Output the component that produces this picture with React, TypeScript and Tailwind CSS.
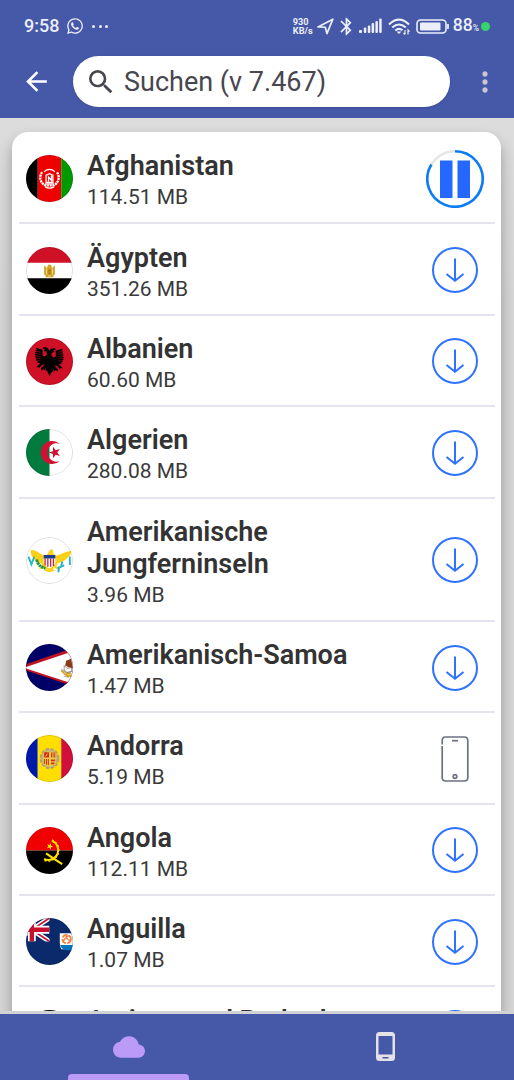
import type { ReactNode } from "react";
import { MdArrowBack, MdBluetooth, MdCloud, MdMoreVert, MdSearch } from "react-icons/md";
import { FaWhatsapp } from "react-icons/fa";

type Status = "paused" | "available" | "installed";

interface Region {
  name: string;
  size: string;
  flag: ReactNode;
  status: Status;
}

const star = "M0-10 2.4-3.1 9.5-3.1 3.8 1.2 5.9 8.1 0 4 -5.9 8.1 -3.8 1.2 -9.5-3.1 -2.4-3.1Z";

const Afghanistan = (
  <>
    <path fill="#000" d="M0 0h12v48H0z" />
    <path fill="#ee0000" d="M12 0h24v48H12z" />
    <path fill="#009900" d="M36 0h12v48H36z" />
    <g fill="none" stroke="#fff">
      <path d="M16.500 17.500a9 9 0 0 0 3 13.500h9a9 9 0 0 0 3-13.500" strokeWidth="2.400" strokeDasharray="2.2 .7" />
      <path d="M18.500 17q5.500-4.500 11 0M19.500 32.500q4.500 2.500 9 0" strokeWidth="1.3" />
      <path d="M20.500 28v-7.500l3.500-1.500 3.500 1.500v7.500zM23 27v-4.500l3 3.500v-5M19.500 29.500h9" strokeWidth="1.3" />
    </g>
  </>
);

const Egypt = (
  <>
    <path fill="#fff" d="M0 0h48v48H0z" />
    <path fill="#ce1126" d="M0 0h48v16H0z" />
    <path fill="#000" d="M0 32h48v16H0z" />
    <path fill="#d3a327" d="M18.500 19l3 2.500 1-3.500h3l1 3.500 3-2.500v9l-1.500 1v2h-8v-2l-1.500-1z" />
    <path stroke="#fbf3dc" strokeWidth=".7" fill="none" d="M21 22v6M27 22v6M22.500 29.500h3" />
    <path fill="#b98a12" d="M22.500 22.500h3v5l-1.500 1-1.500-1z" />
  </>
);

const Albania = (
  <>
    <path fill="#ce1126" d="M0 0h48v48H0z" />
    <path
      fill="#000"
      d="M24 13l-2-3-4-.8-1 1.500 2.500.8-1.500 1.500 3 1 .5 3-2.500 2-2-1V12l-7-2 1 2.300h-1.500l1 2h-1.500l1 2h-1.200l1 2H9l1.500 2H9.200l1.700 2-1 .3 2.300 1.700-.8.8 3 .7-3.900 4 2.300-.2.200 1.600 3.500-3.800 2.500-.4-3.800 4.200.7 2 1.900-1.500.8 1.300 1.800-2.300-.5 3 1.500-.4L24 39l2.600-4.700 1.500.4-.5-3 1.800 2.300.8-1.300 1.900 1.500.7-2-3.800-4.200 2.500.4 3.500 3.800.2-1.600 2.300.2-3.900-4 3-.7-.8-.8 2.300-1.700-1-.3 1.700-2h-1.300l1.500-2h-1.400l1-2H37.400l1-2h-1.500l1-2h-1.500l1-2.300-7 2v6l-2 1-2.500-2 .5-3 3-1-1.500-1.500 2.500-.8-1-1.500-4 .8z"
    />
    <path stroke="#ce1126" strokeWidth=".5" d="M9 13l6 1.500M9 15.500l6 1.300M9 18l6 1M9 20.500l6 .8M10 23l5 .3M39 13l-6 1.500M39 15.500l-6 1.300M39 18l-6 1M39 20.500l-6 .8M38 23l-5 .3" />
  </>
);

const Algeria = (
  <>
    <path fill="#fff" d="M24 0h24v48H24z" />
    <path fill="#007a3d" d="M0 0h24v48H0z" />
    <path fill="#d21034" d="M34.500 15A11.800 11.800 0 1 0 34.500 33 9.500 9.500 0 1 1 34.500 15z" />
    <path fill="#d21034" transform="translate(29.500 24) rotate(-18) scale(.62)" d={star} />
  </>
);

const VirginIslands = (
  <>
    <path fill="#fff" d="M0 0h48v48H0z" />
    <path
      fill="#fcd116"
      d="M24 14c2-3 4-1 4 2l1 3c7 0 8-4 18-5-1 5-7 11-15 13l-1 3 4 2-3 1-4-2v3h3l-7 2-7-2h3v-3l-4 2-3-1 4-2-1-3C8 25 4 19 5 13c8 1 10 6 16 6z"
    />
    <path fill="#fff" d="M18 19h12v7q-1 4-6 6-5-2-6-6z" />
    <path d="M19.500 22v7M22.300 22v8.500M25.200 22v8.500M28 22v7.500" stroke="#c4203b" strokeWidth="1.300" />
    <path fill="#1b3c8f" d="M18 18.500h12V22H18z" />
    <path d="M11 23q1 7 9 9" stroke="#1f9438" strokeWidth="3" strokeDasharray="2.500 .5" fill="none" />
    <path d="M2.500 20 5.500 28 8.500 20M44.800 20v8.500" stroke="#27b6c4" strokeWidth="1.900" fill="none" />
    <path d="M33 36l1-6M36 30l1-5M32 32l7-3" stroke="#27b6c4" strokeWidth="2" />
  </>
);

const AmericanSamoa = (
  <>
    <path fill="#000066" d="M0 0h48v48H0z" />
    <path fill="#c1121f" d="M-2 21.500 48 4v39L-2 26.500z" />
    <path fill="#fff" d="M0 23.500 48 7.500v33L0 25z" />
    <path fill="#8b3a18" d="M41 17l5-2 2 10-4-1-4-2z" />
    <path fill="#fff" stroke="#8a7770" strokeWidth=".8" d="M39 22l3 3 4-1 1 4-5 1-3-2z" />
    <path stroke="#dba21c" strokeWidth="1.800" fill="none" d="M36 27l4 4 6-1M40 31l3 2 4-1" />
    <path stroke="#80614a" strokeWidth=".6" fill="none" d="M36 25.500l5 4 5-1M39 33l5 1" />
  </>
);

const Andorra = (
  <>
    <path fill="#0018a8" d="M0 0h12v48H0z" />
    <path fill="#fedf00" d="M12 0h24v48H12z" />
    <path fill="#d0103a" d="M36 0h12v48H36z" />
    <ellipse cx="24" cy="24" rx="9" ry="9.800" fill="#c7b37f" stroke="#b7a268" strokeWidth="2.200" strokeDasharray="3.500 1.500" />
    <path fill="#f0cf3c" d="M18 17h12v13l-6 2.500-6-2.500z" />
    <path fill="#d5281f" d="M18.500 17.500h5v5.500h-5zM25.500 17.500h.9v5.500h-.9zM27.200 17.500h.9v5.500h-.9zM28.900 17.500h.9v5.500h-.9zM18.500 24.500h1v5h-1zM20.500 24.500h1v6h-1zM22.300 24.500h1v6.500h-1zM25.500 25h4v1.800h-4zM25.500 28h3.500v1.800h-3.500z" />
    <path stroke="#f0cf3c" d="M20 22l2-3" />
  </>
);

const Angola = (
  <>
    <path fill="#f00000" d="M0 0h48v24H0z" />
    <path fill="#000" d="M0 24h48v24H0z" />
    <path d="M26.500 14.200a10 10 0 1 1-8 18.300" fill="none" stroke="#ffe000" strokeWidth="2" />
    <path d="M26.500 13.500a10.900 10.900 0 1 1-8.500 20.200" fill="none" stroke="#ffe000" strokeWidth="2" strokeDasharray="2 1.900" />
    <path d="M20.500 27q7 5 16.500 11" stroke="#ffe000" strokeWidth="2.200" fill="none" />
    <path fill="#ffe000" transform="translate(24.300 19.800) rotate(20) scale(.36)" d={star} />
  </>
);

const Anguilla = (
  <>
    <path fill="#0a2a6c" d="M0 0h48v48H0z" />
    <svg x="0" y="0" width="24" height="24" viewBox="0 0 24 24">
      <path stroke="#fff" strokeWidth="4.800" d="M-12 0 24 24M24 0-12 24" />
      <path stroke="#c8102e" strokeWidth="1.700" d="M-12 0 24 24M24 0-12 24" />
      <path stroke="#fff" strokeWidth="8" d="M6 0v24M0 12h24" />
      <path stroke="#c8102e" strokeWidth="4.500" d="M6 0v24M0 12h24" />
    </svg>
    <path fill="#fff" d="M34.500 15.500H48V32h-12q-1.500-3-1.500-7z" />
    <path fill="#0076bd" d="M35 27.500h13V33h-7q-5-1-6-5.500z" />
    <circle cx="41.500" cy="21.500" r="4.300" fill="none" stroke="#f08040" strokeWidth="1.800" strokeDasharray="6 1.400" />
    <path stroke="#f08040" strokeWidth="1.300" fill="none" d="M38 25q1-5 6-7M41 18q0 4 5 5" />
  </>
);

const Antigua = (
  <>
    <path fill="#000" d="M0 0h48v20H0z" />
    <path fill="#0072c6" d="M0 20h48v10H0z" />
    <path fill="#fff" d="M0 30h48v18H0z" />
    <path fill="#ce1126" d="M0 0 24 48H0zM48 0 24 48h24z" />
  </>
);

const regions: Region[] = [
  { name: "Afghanistan", size: "114.51 MB", flag: Afghanistan, status: "paused" },
  { name: "Ägypten", size: "351.26 MB", flag: Egypt, status: "available" },
  { name: "Albanien", size: "60.60 MB", flag: Albania, status: "available" },
  { name: "Algerien", size: "280.08 MB", flag: Algeria, status: "available" },
  { name: "Amerikanische Jungferninseln", size: "3.96 MB", flag: VirginIslands, status: "available" },
  { name: "Amerikanisch-Samoa", size: "1.47 MB", flag: AmericanSamoa, status: "available" },
  { name: "Andorra", size: "5.19 MB", flag: Andorra, status: "installed" },
  { name: "Angola", size: "112.11 MB", flag: Angola, status: "available" },
  { name: "Anguilla", size: "1.07 MB", flag: Anguilla, status: "available" },
  { name: "Antigua und Barbuda", size: "1.32 MB", flag: Antigua, status: "available" },
];

function StatusIcon({ status }: { status: Status }) {
  if (status === "paused") {
    return (
      <svg className="h-[58px] w-[58px]" viewBox="0 0 58 58" fill="none">
        <circle cx="29" cy="29" r="27.700" stroke="#e6e6e6" strokeWidth="2.600" />
        <path d="M29 1.300A27.700 27.700 0 1 1 5.400 14.500" stroke="#0a7cf5" strokeWidth="2.600" />
        <path fill="#2468ff" d="M14 10.500h12.500V48H14zM31.500 10.500H44V48H31.500z" />
      </svg>
    );
  }
  if (status === "installed") {
    return (
      <svg className="h-[46px] w-[28px]" viewBox="0 0 28 46" fill="none" stroke="#6b7280" strokeWidth="1.700">
        <path d="M1.200 8.500V4.500q0-3.500 3.500-3.500h18.600q3.500 0 3.500 3.500v37q0 3.500-3.500 3.500H4.700q-3.500 0-3.500-3.500V10" />
        <path d="M11 4.700h6" />
        <circle cx="14" cy="40.500" r="1.800" />
      </svg>
    );
  }
  return (
    <svg className="h-[46px] w-[46px]" viewBox="0 0 46 46" fill="none" stroke="#2e72ff" strokeWidth="2">
      <circle cx="23" cy="23" r="22" />
      <path d="M23 11.500v22M14.500 27l8.500 6.700 8.500-6.700" />
    </svg>
  );
}

function RegionRow({ region }: { region: Region }) {
  return (
    <li className="flex items-center border-b-2 border-[#e4e4f1] pt-[2px] pr-[11px] pl-[7px]">
      <svg className="h-[47px] w-[47px] shrink-0 rounded-full" viewBox="0 0 48 48">
        {region.flag}
        <circle cx="24" cy="24" r="23.600" fill="none" stroke="#000" strokeOpacity=".18" strokeWidth=".8" />
      </svg>
      <div className="ml-[14px] w-[300px] pt-[15.2px] pb-[9.2px]">
        <p className="text-[27px] leading-[32px] font-semibold text-[#333]">{region.name}</p>
        <p className="text-[21px] leading-[31px] text-[#3a3a3a]">{region.size}</p>
      </div>
      <div className="ml-auto flex w-[58px] shrink-0 justify-center">
        <StatusIcon status={region.status} />
      </div>
    </li>
  );
}

function StatusBar() {
  return (
    <div className="flex h-[52px] items-center pl-6 text-[#eceefa]">
      <span className="w-[36px] text-[18px] leading-none font-medium">9:58</span>
      <FaWhatsapp className="ml-[6px] h-[18px] w-[18px]" />
      <span className="ml-[8px] flex gap-[3.5px]">
        <i className="h-[3px] w-[3px] rounded-full bg-[#eceefa]" />
        <i className="h-[3px] w-[3px] rounded-full bg-[#eceefa]" />
        <i className="h-[3px] w-[3px] rounded-full bg-[#eceefa]" />
      </span>
      <div className="mr-[24px] ml-auto flex items-center">
        <span className="w-[20px] text-[9.2px] leading-[9px] font-bold">
          930
          <br />
          KB/s
        </span>
        <svg className="ml-[4px] h-[17px] w-[17px]" viewBox="0 0 18 18" fill="none" stroke="currentColor" strokeWidth="1.800" strokeLinejoin="round">
          <path d="M1 9.500 16.800 1.200 10.500 16.500 8.800 9.800z" />
        </svg>
        <MdBluetooth className="ml-[2px] h-[21px] w-[21px]" />
        <svg className="ml-[2px] h-[16px] w-[23px]" viewBox="0 0 23 16" fill="currentColor">
          <rect x="0" y="12" width="3" height="3" rx="1" />
          <rect x="4.800" y="9.500" width="2.500" height="5.500" rx="1" />
          <rect x="8.800" y="7.500" width="2.500" height="7.500" rx="1" />
          <rect x="12.600" y="5" width="2.500" height="10" rx="1" />
          <rect x="16.400" y="3" width="2.500" height="12" rx="1" />
          <rect x="20.200" y="0.500" width="2.500" height="14.500" rx="1" />
        </svg>
        <svg className="ml-[6px] h-[17px] w-[22px]" viewBox="0 0 22 17" fill="none" stroke="currentColor" strokeWidth="2.100">
          <path d="M1 6.500Q11-3.200 21 6.500M4.200 9.500q6.800-6 13.600 0M7.300 12.500q3.700-3 7.200-.2" />
          <path d="M8.500 13.500h5L11 16z" fill="currentColor" stroke="none" />
          <path d="M17 12v4.500M15.500 15l1.500 1.500M20 16.500V12l1.500 1.500" strokeWidth="1.200" />
        </svg>
        <svg className="ml-[6px] h-[15px] w-[34px]" viewBox="0 0 34 15" fill="none" stroke="currentColor">
          <rect x="1" y="1" width="29" height="13" rx="3.500" strokeWidth="1.600" />
          <rect x="4" y="3.500" width="20.500" height="8" rx="1" fill="currentColor" stroke="none" />
          <path d="M32 5v5" strokeWidth="1.800" />
        </svg>
        <span className="ml-[3px] text-[17.5px] leading-none font-medium">
          88<span className="text-[8.5px]">%</span>
        </span>
        <i className="ml-[2px] h-[9px] w-[9px] rounded-full bg-[#36d36b]" />
      </div>
    </div>
  );
}

export default function App() {
  return (
    <div className="flex h-[1080px] w-[514px] flex-col overflow-hidden bg-[#dcdcdc] font-['Roboto',sans-serif]">
      <header className="h-[118px] shrink-0 bg-[#4559a8]">
        <StatusBar />
        <div className="flex items-center pt-[4px]">
          <MdArrowBack className="ml-[21px] h-[31px] w-[31px] text-white" />
          <div className="ml-[21px] flex h-[51px] w-[377px] items-center rounded-full bg-white shadow-sm">
            <MdSearch className="ml-[12px] h-[32px] w-[32px] text-[#48454f]" />
            <span className="ml-[7px] pt-[2px] text-[27px] text-[#48464f]">Suchen (v 7.467)</span>
          </div>
          <MdMoreVert className="ml-[19px] h-[32px] w-[32px] text-[#c9c3d2]" />
        </div>
      </header>

      <main className="min-h-0 flex-1 overflow-hidden bg-linear-to-b from-[#dcdcdc] to-[#d6d6d6] to-20% pt-[14px] pr-[13px] pl-[12px]">
        <ul className="rounded-[16px] bg-white pt-[1px] pr-[6px] pl-[7px] shadow-[0_8px_14px_rgba(0,0,0,0.3)]">
          {regions.map((region) => (
            <RegionRow key={region.name} region={region} />
          ))}
        </ul>
      </main>

      <nav className="flex h-[69px] shrink-0 border-t-[3px] border-[#d2d2d4] bg-[#4559a8]">
        <div className="flex flex-1 flex-col items-center justify-between pt-[17px]">
          <MdCloud className="h-[32px] w-[32px] text-[#bb9af8]" />
          <div className="h-[6.5px] w-[121px] rounded-t-[4px] bg-[#bb9af8]" />
        </div>
        <div className="flex flex-1 justify-center pt-[18px]">
          <svg className="h-[30px] w-[19px]" viewBox="0 0 19 30">
            <path fill="#e4e2e6" fillRule="evenodd" d="M3.500 0h12Q19 0 19 3.500v22q0 3.500-3.500 3.500h-12Q0 29 0 25.500v-22Q0 0 3.500 0zM2.500 4v18.500h14V4zM6.500 25v1.600h6V25z" />
          </svg>
        </div>
      </nav>
    </div>
  );
}
